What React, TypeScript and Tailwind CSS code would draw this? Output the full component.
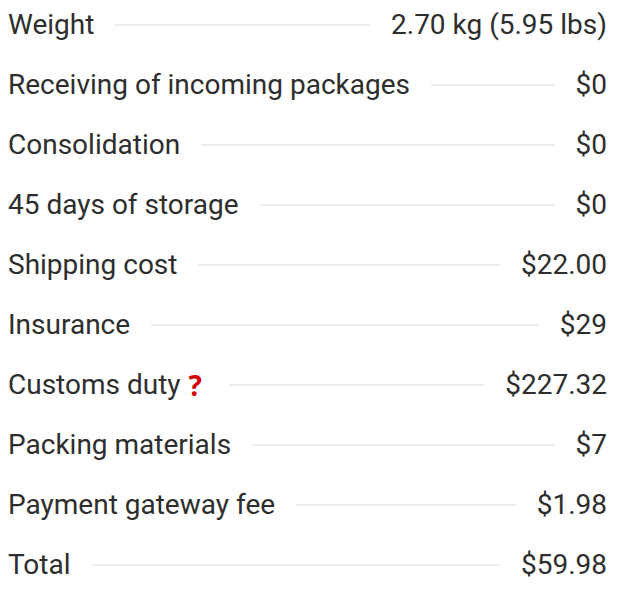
const rows: { label: string; value: string; help?: boolean }[] = [
  { label: "Weight", value: "2.70 kg (5.95 lbs)" },
  { label: "Receiving of incoming packages", value: "$0" },
  { label: "Consolidation", value: "$0" },
  { label: "45 days of storage", value: "$0" },
  { label: "Shipping cost", value: "$22.00" },
  { label: "Insurance", value: "$29" },
  { label: "Customs duty", value: "$227.32", help: true },
  { label: "Packing materials", value: "$7" },
  { label: "Payment gateway fee", value: "$1.98" },
  { label: "Total", value: "$59.98" },
]

export default function App() {
  return (
    <div className="w-[622px] h-[600px] bg-white overflow-hidden">
      <div
        className="flex flex-col gap-[24px] pt-[7px] pl-[8px] pr-[15px] text-[#2e2e2e] text-[28px]"
        style={{ fontFamily: "Roboto, 'Liberation Sans', sans-serif" }}
      >
        {rows.map((row) => (
          <div key={row.label} className="flex items-center h-[36px] leading-[36px]">
            <span className="whitespace-nowrap">{row.label}</span>
            {row.help && (
              <span
                className="ml-[8px] mr-[6px] text-[#d40000] font-bold text-[28px]"
                style={{ fontFamily: "'Open Sans', sans-serif" }}
              >
                ?
              </span>
            )}
            <div className="flex-1 h-[2px] bg-[#ececec] mx-[21px]" />
            <span className="whitespace-nowrap">{row.value}</span>
          </div>
        ))}
      </div>
    </div>
  )
}
